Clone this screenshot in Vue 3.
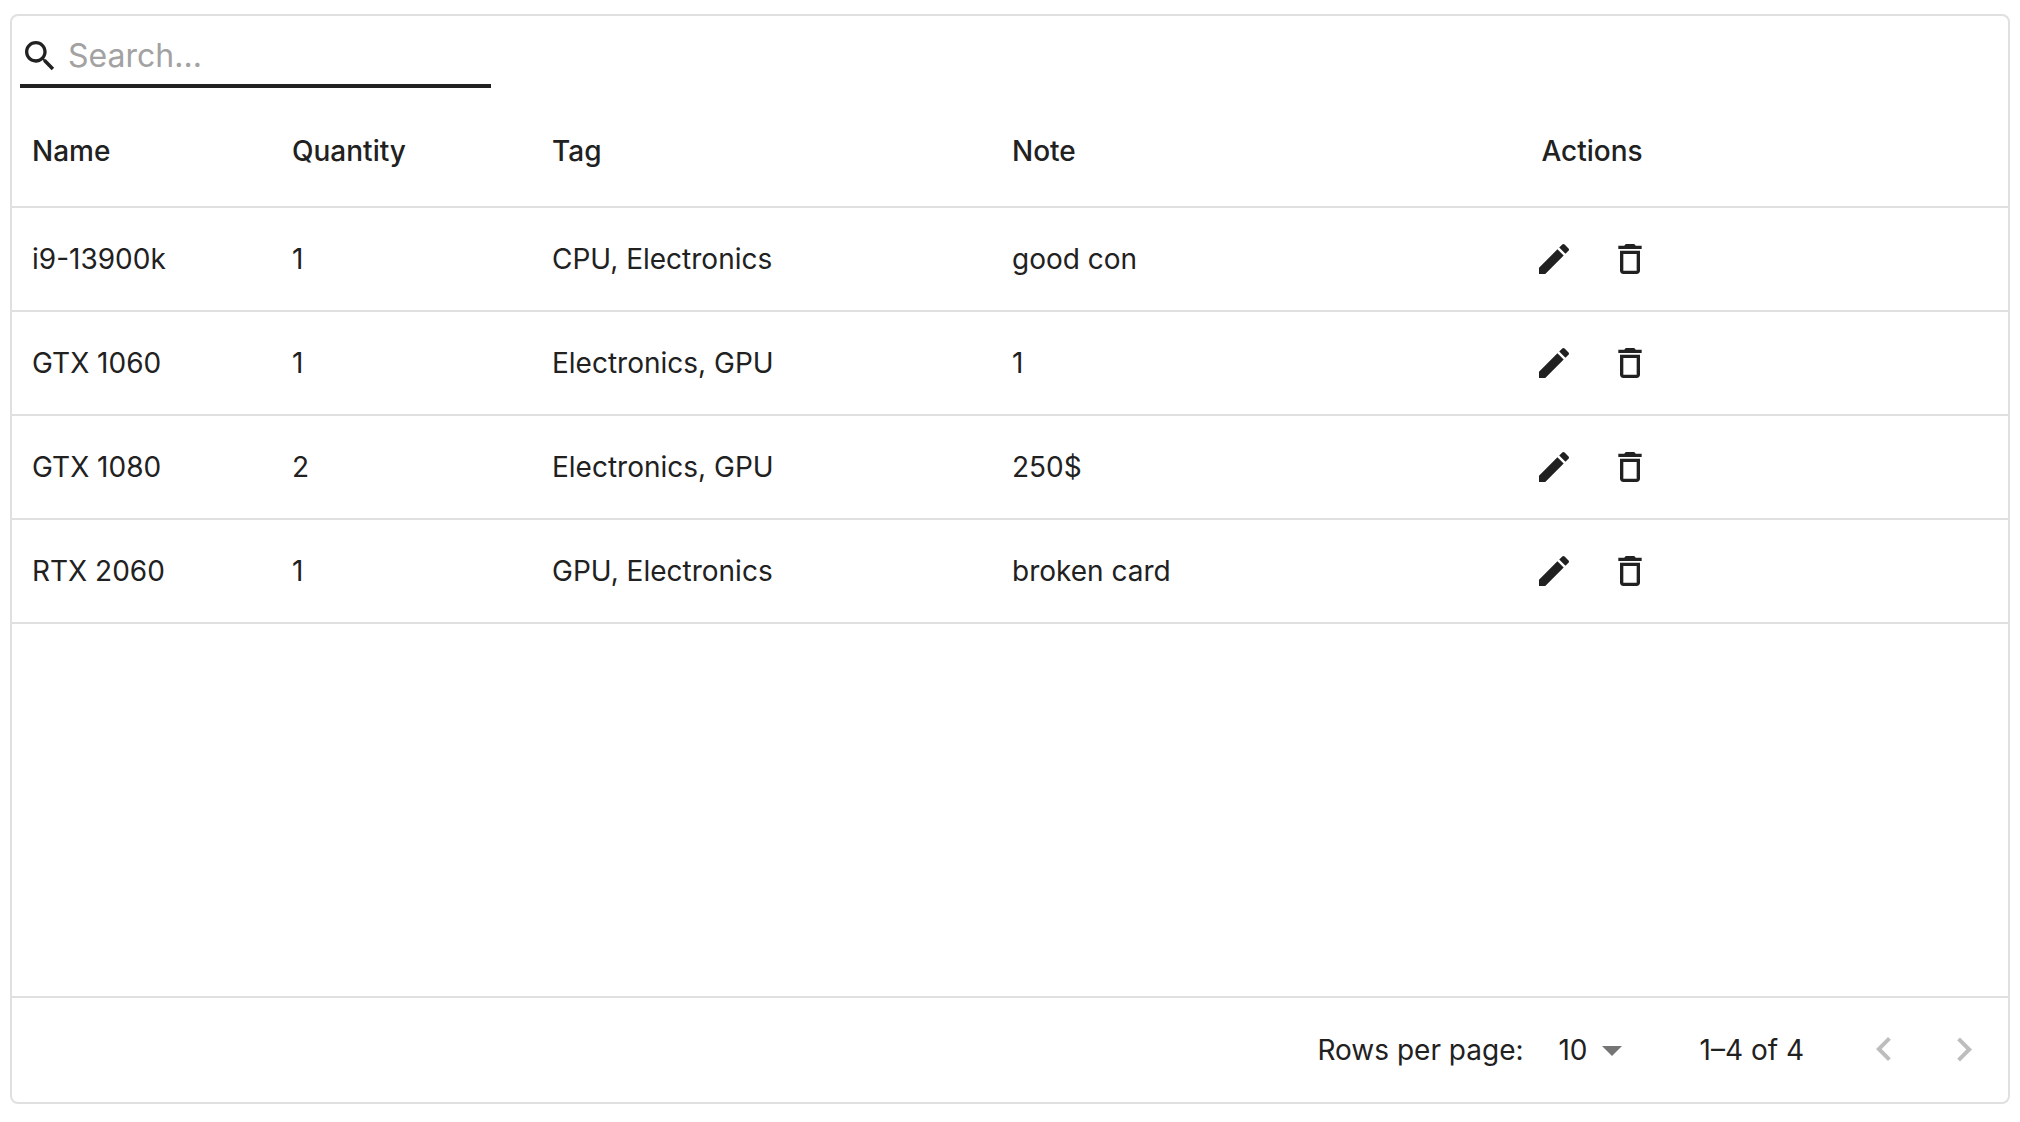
<script setup>
import { computed, ref } from 'vue'

const items = ref([
  { name: 'i9-13900k', quantity: 1, tag: 'CPU, Electronics', note: 'good con' },
  { name: 'GTX 1060', quantity: 1, tag: 'Electronics, GPU', note: '1' },
  { name: 'GTX 1080', quantity: 2, tag: 'Electronics, GPU', note: '250$' },
  { name: 'RTX 2060', quantity: 1, tag: 'GPU, Electronics', note: 'broken card' },
])

const search = ref('')
const pageSize = ref(10)

const visible = computed(() => {
  const q = search.value.trim().toLowerCase()
  return items.value.filter((item) =>
    Object.values(item).some((value) => String(value).toLowerCase().includes(q)),
  )
})

function removeItem(item) {
  items.value = items.value.filter((other) => other !== item)
}
</script>

<template>
  <main class="grid">
    <div class="toolbar">
      <label class="search">
        <svg class="icon" viewBox="0 0 24 24" aria-hidden="true">
          <path d="M15.5 14h-.79l-.28-.27C15.41 12.59 16 11.11 16 9.5 16 5.91 13.09 3 9.5 3S3 5.91 3 9.5 5.91 16 9.5 16c1.61 0 3.09-.59 4.23-1.57l.27.28v.79l5 4.99L20.49 19l-4.99-5zm-6 0C7.01 14 5 11.99 5 9.5S7.01 5 9.5 5 14 7.01 14 9.5 11.99 14 9.5 14z" />
        </svg>
        <input v-model="search" type="text" placeholder="Search..." aria-label="Search" />
      </label>
    </div>

    <div class="body">
      <table>
        <colgroup>
          <col class="narrow" />
          <col class="narrow" />
          <col class="wide" />
          <col class="wide" />
          <col class="tools" />
          <col />
        </colgroup>
        <thead>
          <tr>
            <th scope="col">Name</th>
            <th scope="col">Quantity</th>
            <th scope="col">Tag</th>
            <th scope="col">Note</th>
            <th scope="col" class="centered">Actions</th>
            <td></td>
          </tr>
        </thead>
        <tbody>
          <tr v-for="item in visible" :key="item.name">
            <td>{{ item.name }}</td>
            <td>{{ item.quantity }}</td>
            <td>{{ item.tag }}</td>
            <td>{{ item.note }}</td>
            <td>
              <div class="actions">
                <button type="button" aria-label="Edit">
                  <svg class="icon" viewBox="0 0 24 24" aria-hidden="true">
                    <path d="M3 17.25V21h3.75L17.81 9.94l-3.75-3.75L3 17.25zM20.71 7.04c.39-.39.39-1.02 0-1.41l-2.34-2.34a.9959.9959 0 0 0-1.41 0l-1.83 1.83 3.75 3.75 1.83-1.83z" />
                  </svg>
                </button>
                <button type="button" aria-label="Delete" @click="removeItem(item)">
                  <svg class="icon" viewBox="0 0 24 24" aria-hidden="true">
                    <path d="M6 19c0 1.1.9 2 2 2h8c1.1 0 2-.9 2-2V7H6v12zM8 9h8v10H8V9zm7.5-5-1-1h-5l-1 1H5v2h14V4h-3.5z" />
                  </svg>
                </button>
              </div>
            </td>
            <td></td>
          </tr>
        </tbody>
      </table>
    </div>

    <footer class="footer">
      <label for="page-size">Rows per page:</label>
      <div class="select">
        <select id="page-size" v-model.number="pageSize">
          <option :value="10">10</option>
          <option :value="25">25</option>
          <option :value="50">50</option>
        </select>
        <svg viewBox="0 0 24 24" aria-hidden="true"><path d="m7 10 5 5 5-5z" /></svg>
      </div>
      <span class="range">1–{{ visible.length }} of {{ visible.length }}</span>
      <nav class="pager" aria-label="Pagination">
        <button type="button" disabled aria-label="Previous page">
          <svg viewBox="0 0 24 24" aria-hidden="true"><path d="M15.41 16.09l-4.58-4.59 4.58-4.59L14 5.5l-6 6 6 6z" /></svg>
        </button>
        <button type="button" disabled aria-label="Next page">
          <svg viewBox="0 0 24 24" aria-hidden="true"><path d="M8.59 16.34l4.58-4.59-4.58-4.59L10 5.75l6 6-6 6z" /></svg>
        </button>
      </nav>
    </footer>
  </main>
</template>

<style>
body {
  margin: 0;
  background: #fff;
}
</style>

<style scoped>
.grid {
  box-sizing: border-box;
  display: flex;
  flex-direction: column;
  min-height: calc(100vh - 32px);
  margin: 14px 10px 18px;
  border: 2px solid #e0e0e0;
  border-radius: 8px;
  color: #212121;
  font-family: Inter, "Liberation Sans", sans-serif;
  font-size: 28px;
  line-height: 40px;
}

svg {
  display: block;
  flex: none;
  fill: currentColor;
}

.icon {
  width: 40px;
  height: 40px;
}

button {
  display: block;
  border: 0;
  background: none;
  color: inherit;
  cursor: pointer;
}

.toolbar {
  padding: 8px;
}

.search {
  box-sizing: border-box;
  display: flex;
  align-items: center;
  gap: 8px;
  width: 471px;
  max-width: 100%;
  height: 64px;
  padding-top: 4px;
  border-bottom: 4px solid #212121;
}

.search input {
  flex: 1;
  min-width: 0;
  padding: 0;
  border: 0;
  outline: 0;
  background: none;
  color: inherit;
  font: inherit;
  font-size: 32px;
}

.search input::placeholder {
  color: #a2a2a2;
  opacity: 1;
}

.body {
  flex: 1;
  overflow-x: auto;
}

table {
  width: 100%;
  table-layout: fixed;
  border-collapse: separate;
  border-spacing: 0;
}

.narrow {
  width: 260px;
}

.wide {
  width: 460px;
}

.tools {
  width: 280px;
}

th,
td {
  box-sizing: border-box;
  height: 104px;
  padding: 0 20px;
  border-bottom: 2px solid #e0e0e0;
  text-align: left;
  vertical-align: middle;
  white-space: nowrap;
}

thead th,
thead td {
  height: 112px;
  font-weight: 500;
}

th.centered {
  text-align: center;
}

.actions {
  display: flex;
  justify-content: center;
  gap: 16px;
}

.actions button {
  padding: 10px;
}

.footer {
  display: flex;
  align-items: center;
  justify-content: flex-end;
  min-height: 104px;
  padding-right: 4px;
  border-top: 2px solid #e0e0e0;
}

.select {
  position: relative;
  margin: 0 64px 0 16px;
}

.select select {
  display: block;
  width: 96px;
  height: 48px;
  padding: 0 48px 0 16px;
  border: 0;
  appearance: none;
  background: none;
  color: inherit;
  font: inherit;
  text-align: right;
  text-align-last: right;
  cursor: pointer;
}

.select svg {
  position: absolute;
  top: 0;
  right: 0;
  width: 48px;
  height: 48px;
  color: #757575;
  pointer-events: none;
}

.pager {
  display: flex;
  margin-left: 40px;
}

.pager button {
  padding: 16px;
  color: #bdbdbd;
  cursor: default;
}

.pager svg {
  width: 48px;
  height: 48px;
}
</style>
